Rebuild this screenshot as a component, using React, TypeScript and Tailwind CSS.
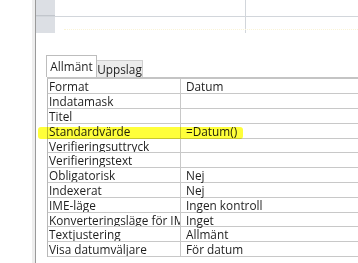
const rows: [string, string][] = [
  ['Format', 'Datum'],
  ['Indatamask', ''],
  ['Titel', ''],
  ['Standardvärde', '=Datum()'],
  ['Verifieringsuttryck', ''],
  ['Verifieringstext', ''],
  ['Obligatorisk', 'Nej'],
  ['Indexerat', 'Nej'],
  ['IME-läge', 'Ingen kontroll'],
  ['Konverteringsläge för IME', 'Inget'],
  ['Textjustering', 'Allmänt'],
  ['Visa datumväljare', 'För datum'],
]

export default function App() {
  return (
    <div className="relative flex w-[358px] h-[263px] overflow-hidden bg-white text-[#1e1e1e] font-['Open_Sans',_'Noto_Sans',_sans-serif]">
      <div className="w-[32px] shrink-0" />
      <div className="w-[3px] shrink-0 bg-[#eeeeee]" />
      <div className="w-[1px] shrink-0 bg-[#9a9a9a]" />

      <div className="flex flex-1 flex-col">
        {/* datasheet grid above */}
        <div className="flex h-[17px] border-b border-[#d2d6db]">
          <div className="w-[19px] bg-[#dcdfe4] border-b border-[#c2c6cc]" />
          <div className="w-[191px] border-r border-[#d2d6db]" />
          <div className="flex-1" />
        </div>
        <div className="flex h-[16px]">
          <div className="w-[19px] bg-[#dcdfe4]" />
          <div className="w-[191px] border-r border-[#d2d6db]" />
          <div className="flex-1" />
        </div>
        <div className="ml-[28px] mt-[-4px] h-0 border-t border-dotted border-[#faf4d6]" />

        {/* property sheet */}
        <div className="mt-[25px] flex pl-[10px] items-end text-[11.8px] leading-[13px]">
          <div className="flex h-[22px] w-[51px] items-center justify-center border-x border-t border-[#bdbdbd] bg-white">
            Allmänt
          </div>
          <div className="flex h-[17px] w-[46px] items-center justify-center border-r border-t border-[#cfcfcf] bg-[#ececec]">
            Uppslag
          </div>
        </div>
        <div className="ml-[11px] border-t-2 border-double border-[#c4c4c4]">
          <div className="border-l border-[#b8b8b8]">
            {rows.map(([label, value], i) => (
              <div
                key={label}
                className={`flex border-b border-[#c8c8c8] text-[11.8px] leading-[12px] ${i === 4 || i === 9 ? 'h-[14px]' : 'h-[15px]'}`}
              >
                <div className="flex w-[133px] shrink-0 items-center overflow-hidden whitespace-nowrap border-r border-[#c8c8c8] pl-[1px]">
                  {label}
                </div>
                <div className="flex flex-1 items-center whitespace-nowrap pl-[5px]">{value}</div>
              </div>
            ))}
          </div>
        </div>
      </div>

      {/* yellow marker highlight */}
      <div className="pointer-events-none absolute left-[38px] top-[127px] h-[12px] w-[205px] rounded-[3px] bg-[#ffff3a] mix-blend-multiply" />
    </div>
  )
}
